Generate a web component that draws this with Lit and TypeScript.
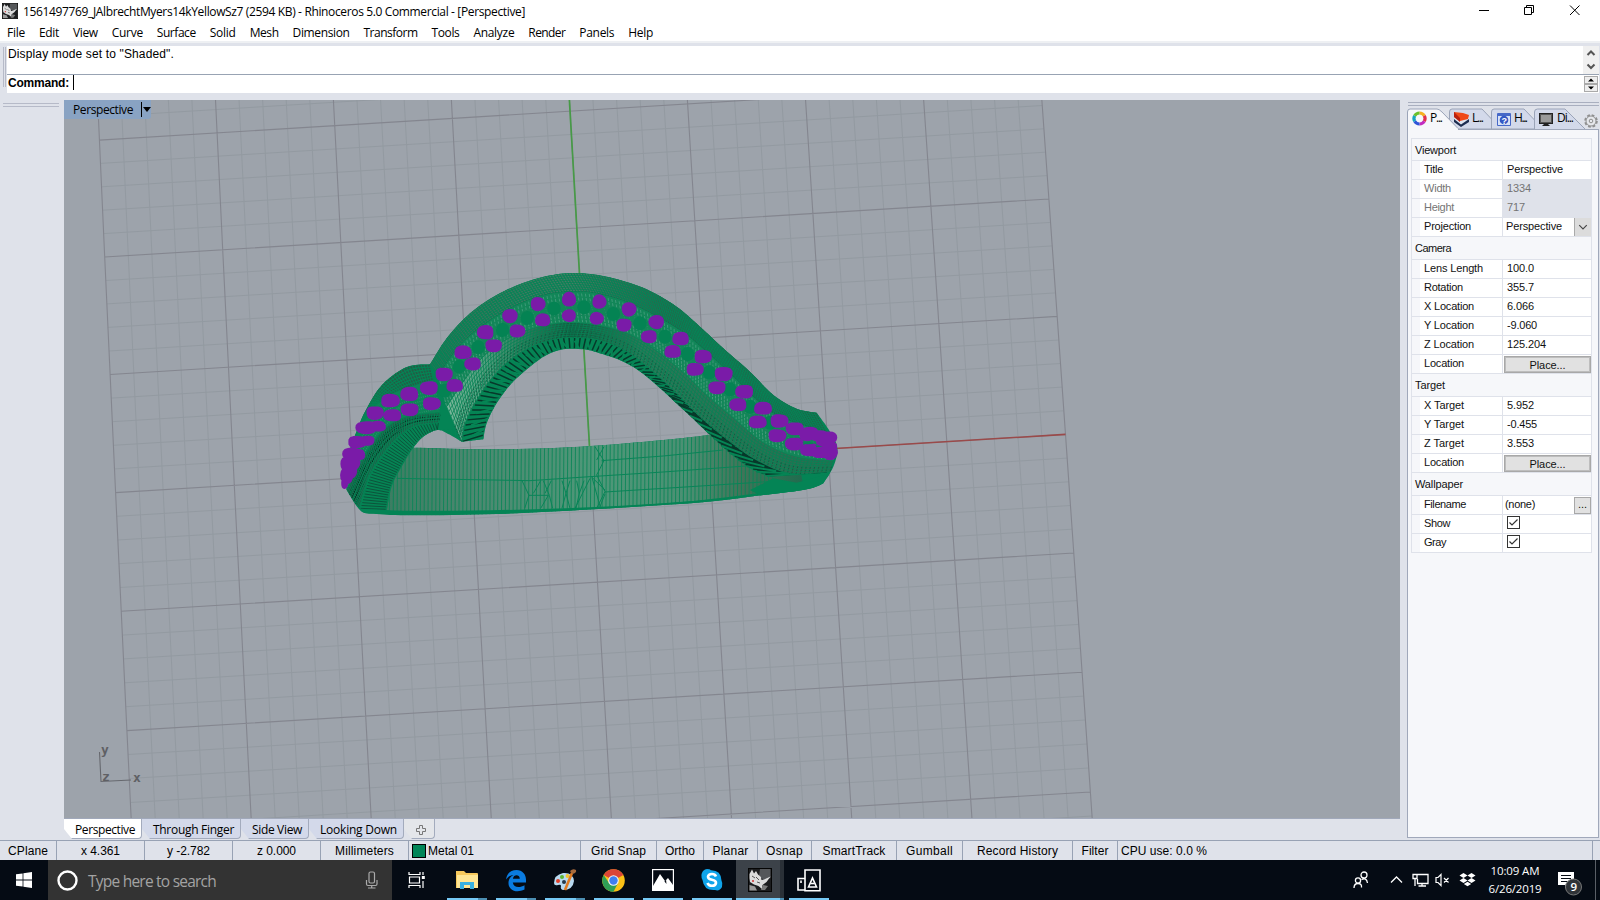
import { LitElement, html, svg, css } from "lit";
import { customElement, property } from "lit/decorators.js";
import { classMap } from "lit/directives/class-map.js";
import { styleMap } from "lit/directives/style-map.js";

type Pt = [number, number];

/** One line of text spaced out to a given width in pixels. */
@customElement("fit-text")
class FitText extends LitElement {
  @property() text = "";
  @property({ type: Number }) w = 0;
  static styles = css`
    :host { display: inline-block; flex: none; white-space: pre; overflow: visible; }
    .t { display: inline-block; }
  `;
  updated() {
    const s = this.renderRoot.querySelector(".t") as HTMLElement;
    s.style.letterSpacing = "0px";
    const natural = s.getBoundingClientRect().width;
    s.style.letterSpacing = (this.w - natural) / this.text.length + "px";
  }
  render() {
    return html`<span class="t">${this.text}</span>`;
  }
}
const fit = (text: string, w: number) => html`<fit-text .text=${text} .w=${w}></fit-text>`;

/* ---------- geometry helpers ---------- */
function parse(s: string): Pt[] {
  return s.trim().split(/\s+/).map((p) => p.split(",").map(Number) as Pt);
}
function smooth(p: Pt[], k = 8): Pt[] {
  const out: Pt[] = [];
  for (let i = 0; i < p.length - 1; i++) {
    const a = p[Math.max(0, i - 1)], b = p[i], c = p[i + 1], d = p[Math.min(p.length - 1, i + 2)];
    for (let j = 0; j < k; j++) {
      const t = j / k, t2 = t * t, t3 = t2 * t;
      const f = (n: 0 | 1) =>
        0.5 * (2 * b[n] + (c[n] - a[n]) * t + (2 * a[n] - 5 * b[n] + 4 * c[n] - d[n]) * t2 + (3 * b[n] - a[n] - 3 * c[n] + d[n]) * t3);
      out.push([f(0), f(1)]);
    }
  }
  out.push(p[p.length - 1]);
  return out;
}
function resample(p: Pt[], n: number): Pt[] {
  const len = [0];
  for (let i = 1; i < p.length; i++) len.push(len[i - 1] + Math.hypot(p[i][0] - p[i - 1][0], p[i][1] - p[i - 1][1]));
  const out: Pt[] = [];
  let j = 1;
  for (let i = 0; i <= n; i++) {
    const l = (len[len.length - 1] * i) / n;
    while (j < p.length - 1 && len[j] < l) j++;
    const t = (l - len[j - 1]) / (len[j] - len[j - 1] || 1);
    out.push([p[j - 1][0] + (p[j][0] - p[j - 1][0]) * t, p[j - 1][1] + (p[j][1] - p[j - 1][1]) * t]);
  }
  return out;
}
const mix = (a: Pt, b: Pt, t: number): Pt => [a[0] + (b[0] - a[0]) * t, a[1] + (b[1] - a[1]) * t];
const path = (p: Pt[], close = false) => "M" + p.map((q) => q[0].toFixed(1) + " " + q[1].toFixed(1)).join("L") + (close ? "Z" : "");
const curve = (s: string) => smooth(parse(s));
const area = (a: Pt[], b: Pt[]) => path([...a, ...b.slice().reverse()], true);
/** Cross lines between two edges. */
function rungs(a: Pt[], b: Pt[], n: number, t0 = 0, t1 = 1, skew = 0) {
  const A = resample(a, n), B = resample(b, n);
  let d = "";
  for (let i = 0; i <= n; i++) {
    const j = Math.max(0, Math.min(n, i + skew));
    d += path([mix(A[i], B[j], t0), mix(A[i], B[j], t1)]);
  }
  return d;
}
/** Lines running along a ribbon. */
function rails(a: Pt[], b: Pt[], m: number) {
  const A = resample(a, 90), B = resample(b, 90);
  let d = "";
  for (let k = 0; k <= m; k++) d += path(A.map((p, i) => mix(p, B[i], k / m)));
  return d;
}

/* ---------- construction grid ---------- */
function gridPoint(u: number, v: number): Pt {
  const l: Pt = [115.6 - 5.55 * v + 0.05 * v * v, 492.6 - 118.4 * v + 0.3 * v * v];
  const r: Pt = [1065.5 - 8.3 * v, 434.4 - 118.3 * v + 0.3 * v * v];
  return mix(l, r, (u + 4) / 8);
}
let minor = "", major = "";
for (let i = -20; i <= 20; i++) {
  const a = path([gridPoint(i / 5, 4), gridPoint(i / 5, 2), gridPoint(i / 5, 0), gridPoint(i / 5, -2), gridPoint(i / 5, -4)]);
  const b = path([gridPoint(-4, i / 5), gridPoint(4, i / 5)]);
  if (i % 5) minor += a + b;
  else major += a + b;
}
const greenAxis = path([gridPoint(0, 4), gridPoint(0, 0)]);
const redAxis = path([gridPoint(0, 0), gridPoint(4, 0)]);

/* ---------- ring model, three units per pixel ---------- */
const outer = curve("300,313 350,235 420,160 500,105 590,65 680,43 760,40 850,55 950,88 1040,140 1110,200 1180,265 1260,335 1330,405 1400,446 1460,458");
const chanO = curve("325,345 390,255 460,195 540,145 630,108 715,95 800,100 900,130 990,175 1070,225 1140,285 1210,350 1270,410 1330,460 1400,490 1490,515");
const chanI = curve("350,440 400,365 450,300 510,250 580,215 650,195 720,188 800,195 890,220 970,266 1060,338 1130,406 1210,474 1300,548 1400,590 1510,602");
const tube = curve("395,545 405,490 440,420 485,355 540,300 600,262 660,240 720,232 800,238 880,268 950,318 1030,390 1110,470 1200,545 1280,600 1380,640 1500,635");
const inner = curve("460,538 470,490 500,430 545,370 600,320 650,285 700,268 760,268 800,277 880,305 950,350 1050,440 1140,525 1200,580 1260,625 1310,648");
const leftOut = curve("300,313 240,318 190,345 145,388 105,455 75,530 50,600 50,690");
const leftChO = curve("310,360 250,378 190,400 140,436 100,490 70,550 46,620");
const leftChI = curve("330,458 240,468 175,498 125,555 85,620 50,690");
const leftMid = curve("325,488 255,498 200,535 150,595 115,655 88,745");
const leftIn = curve("322,510 280,530 250,563 215,620 185,680 170,755");
const bandTop = curve("200,563 500,568 750,560 1000,540 1220,515 1400,560");
const bandBot = curve("170,752 300,760 500,758 750,746 1100,722 1420,680");
let staves = "";
for (let x = 178; x < 1330; x += 11.6) staves += `M${x + 2} 510L${x} 770`;
const silhouette =
  path([
    ...curve("50,690 48,640 60,570 85,500 105,455 145,388 190,345 240,318 300,313"),
    ...outer,
    ...curve("1460,458 1500,515 1522,565 1510,620 1480,670"),
    ...curve("1480,670 1430,688 1300,705 1100,728 750,750 500,762 250,766 140,762 92,752 50,690"),
  ], true) +
  path([...inner.filter((p) => p[0] <= 1140), ...curve("1140,525 1000,540 750,560 500,568 250,563"), ...curve("250,563 280,530 322,510 355,522 395,545"), [460, 538]], true);

const gems: [number, number, number, number][] = (
  "717,118,20,21 624,132,21,20 540,168,22,20 466,217,23,20 399,277,24,19 342,343,24,19 297,384,25,19 238,402,25,20 181,422,26,19 135,459,24,19 " +
  "108,503,29,18 142,499,24,15 82,546,26,17 112,542,20,14 64,581,25,17 84,584,20,16 52,612,20,22 66,608,24,22 50,645,18,26 44,668,10,18 62,635,18,20 " +
  "717,167,20,18 638,180,21,18 562,213,22,18 491,257,23,18 428,312,23,18 374,377,23,18 305,431,25,18 239,449,25,18 187,466,25,17 " +
  "808,125,20,20 897,148,21,20 979,186,22,20 1052,236,23,19 1119,290,24,19 1181,342,25,20 1243,395,25,19 1299,445,25,18 1348,483,25,19 1394,506,25,18 " +
  "1438,520,26,18 1470,528,25,16 1500,533,20,18 1485,545,25,14 1430,525,20,18 " +
  "800,175,20,18 882,195,21,18 957,230,22,18 1028,275,23,18 1095,328,24,18 1161,383,24,18 1224,434,24,18 1283,486,25,18 1342,527,25,18 1393,552,26,18 " +
  "1440,570,27,18 1472,576,26,17 1500,578,22,21 1506,560,15,14"
).split(" ").map((g) => g.split(",").map(Number) as [number, number, number, number]);
function gemPath([x, y, a, b]: number[], i: number) {
  const pts: Pt[] = [];
  for (let k = 0; k < 16; k++) {
    const t = (k / 16) * Math.PI * 2;
    const c = Math.cos(t), s = Math.sin(t);
    const r = 1.07 + 0.1 * Math.pow(Math.abs(Math.sin(2 * t)), 2) * (a - b > 2 ? 1 : 0.2) + 0.035 * Math.sin(3 * t + i * 1.7);
    pts.push([x + a * r * c, y + b * r * s]);
  }
  return path(pts, true);
}
const gemShape = gems.map(gemPath).join("");
const beads = "762,142 672,146 592,174 518,210 445,262 388,320 345,392 275,420 850,162 930,190 1005,230 1073,282 1138,337 1200,388 1260,440 1320,488"
  .split(" ").map((s) => s.split(",").map(Number));

@customElement("model-view")
class ModelView extends LitElement {
  static styles = css`
    :host { display: block; overflow: hidden; }
    svg { display: block; }
    .lab { font: bold 13px "DejaVu Sans Mono", monospace; fill: #5f6064; }
    .f { fill: none; }
  `;
  render() {
    return html`<svg width="1336" height="718" viewBox="64 100 1336 718">
      <defs>
        <linearGradient id="band" x1="0" x2="1"><stop offset="0" stop-color="#3c7d62" /><stop offset=".2" stop-color="#4c8870" /><stop offset=".5" stop-color="#4f9879" /><stop offset=".72" stop-color="#4b9073" /><stop offset=".85" stop-color="#427459" /><stop offset="1" stop-color="#1f6c4e" /></linearGradient>
        <linearGradient id="tb" x1="0" x2="1"><stop offset="0" stop-color="#7cb89c" /><stop offset=".08" stop-color="#5ba585" /><stop offset=".2" stop-color="#2f7d5c" /><stop offset=".32" stop-color="#14583e" /><stop offset=".5" stop-color="#2a7a58" /><stop offset="1" stop-color="#2c6c50" /></linearGradient>
        <linearGradient id="rim" x1="0" x2="1"><stop offset="0" stop-color="#2a7256" /><stop offset=".35" stop-color="#4b7d66" /><stop offset=".6" stop-color="#2c5f49" /><stop offset="1" stop-color="#245c45" /></linearGradient>
        <clipPath id="sil"><path d=${silhouette} clip-rule="evenodd" /></clipPath>
      </defs>
      <rect x="64" y="100" width="1336" height="718" fill="#9da3ab" />
      <path class="f" d=${minor} stroke="#939aa1" stroke-width="1" />
      <path class="f" d=${major} stroke="#84868f" stroke-width="1.1" />
      <path class="f" d=${redAxis} stroke="#9a4a4a" stroke-width="1.6" />
      <path class="f" d=${greenAxis} stroke="#479a47" stroke-width="1.7" />
      <path class="f" d="M99.5 752 101 781.5 131 780" stroke="#66686e" stroke-width="1.1" />
      <text class="lab" x="101" y="754">y</text>
      <text class="lab" x="102" y="781">z</text>
      <text class="lab" x="133" y="782">x</text>
      <g transform="translate(330 260) scale(.33333)">
        <path d=${silhouette} fill="#048455" fill-rule="evenodd" />
        <g clip-path="url(#sil)">
          <path d=${area(bandTop, bandBot)} fill="url(#band)" />
          <path class="f" d=${staves} stroke="#098557" stroke-width="2.6" />
          <path class="f" d="M200 655 600 662 780 650 1000 636 1330 612M815 602 1000 588 1180 570M825 696 1050 682 1330 664" stroke="#098557" stroke-width="3" />
          <path class="f" d="M795 560 822 602 800 645 825 695 800 745M822 560 800 600M786 652 825 690M786 652 812 745M825 702 808 745M735 745 780 655M576 662 597 706 584 745M597 706H655M632 662 610 700M640 662 658 706 668 745M655 706 632 745M664 662 645 700M696 662 708 700 696 745M720 662 708 700 720 745M740 662 748 700 738 745M762 662 748 700" stroke="#098557" stroke-width="3" />
          <path d=${area(inner, tube)} fill="#058454" />
          <path class="f" d=${rungs(tube, inner, 84, 0.05, 0.95, 1)} stroke="#07382a" stroke-width="4.4" />
          <path class="f" d=${rungs(tube, inner, 34, 0.3, 1, 1)} stroke="#058454" stroke-width="6" />
          <path d=${area(chanI, tube)} fill="url(#tb)" />
          <path class="f" d=${rails(chanI, tube, 7)} stroke="#078356" stroke-width="2.4" />
          <path class="f" d=${rungs(chanI, tube, 130)} stroke="#078356" stroke-width="2.4" />
          <path class="f" d=${rungs(chanI, tube, 110, 0.55, 1)} stroke="#124e39" stroke-width="2" stroke-dasharray="5 4" />
          <path d=${area(outer, chanO)} fill="url(#rim)" />
          <path class="f" d=${rails(outer, chanO, 8)} stroke="#058455" stroke-width="2.6" />
          <path class="f" d=${rungs(outer, chanO, 165)} stroke="#078356" stroke-width="3.2" />
          <path class="f" d=${rails(resample(chanO, 90), resample(chanO, 90).map((p) => [p[0], p[1] + 5] as Pt), 1)} stroke="#0b6545" stroke-width="2" stroke-dasharray="6 4" />
          <path d=${area(chanO, chanI)} fill="#128658" />
          <path class="f" d=${rungs(chanO, chanI, 120, 0.06, 0.3)} stroke="#48a080" stroke-width="2.4" stroke-dasharray="9 4" />
          <path class="f" d=${rungs(chanO, chanI, 120, 0.66, 0.97)} stroke="#4c9f80" stroke-width="2.6" stroke-dasharray="8 3" />
          <path class="f" d=${rungs(chanO, chanI, 70, 0.3, 0.7, 1)} stroke="#3b9872" stroke-width="1.6" stroke-dasharray="3 5" />
          ${beads.map(([x, y]) => svg`<ellipse cx=${x} cy=${y} rx="20" ry="21" fill="#048353"/>`)}
          <path d=${area(leftOut, leftChO)} fill="#245c45" />
          <path class="f" d=${rails(leftOut, leftChO, 6) + rungs(leftOut, leftChO, 56)} stroke="#058455" stroke-width="3.2" />
          <path d=${area(leftChO, leftChI)} fill="#0d8557" />
          <path class="f" d=${rungs(leftChO, leftChI, 60, 0.3, 0.95)} stroke="#3f9a77" stroke-width="1.8" stroke-dasharray="4 7" />
          <path d=${area(leftMid, leftIn)} fill="#058454" />
          <path class="f" d=${rungs(leftMid, leftIn, 42, 0.05, 0.95, -1)} stroke="#0e4d38" stroke-width="2.6" />
          <path d=${area(leftChI, leftMid)} fill="#1d6249" />
          <path class="f" d=${rungs(leftChI, leftMid, 60, 0.2, 0.8)} stroke="#052a1e" stroke-width="4" stroke-dasharray="6 5" />
          <path class="f" d=${rails(leftChI, leftMid, 4) + rungs(leftChI, leftMid, 50)} stroke="#058455" stroke-width="2.8" />
          <path class="f" d="M92 752C300 768 800 752 1100 728S1430 690 1480 670" stroke="#048455" stroke-width="12" />
          <path d="M1260 690 1330 655 1400 668 1500 640 1480 680 1300 712Z" fill="#048455" />
        </g>
        <path d=${gemShape} fill="#7a1ba8" />
        <path d="M1416 548 1440 545 1452 552 1430 553ZM1456 556 1478 559 1460 562Z" fill="#0b8257" />
      </g>
    </svg>`;
  }
}

const MENUS: [string, number][] = [["File", 18], ["Edit", 20], ["View", 25], ["Curve", 31], ["Surface", 39], ["Solid", 26], ["Mesh", 29], ["Dimension", 57], ["Transform", 54], ["Tools", 28], ["Analyze", 41], ["Render", 37], ["Panels", 35], ["Help", 25]];

type Row = { l: string; w: number; v?: string; vw?: number; kind?: string };
const PROPS: { title: string; w: number; rows: Row[] }[] = [
  { title: "Viewport", w: 41, rows: [
    { l: "Title", w: 19, v: "Perspective", vw: 56 }, { l: "Width", w: 27, v: "1334", vw: 24, kind: "off" },
    { l: "Height", w: 30, v: "717", vw: 18, kind: "off" }, { l: "Projection", w: 47, v: "Perspective", vw: 56, kind: "drop" }] },
  { title: "Camera", w: 36, rows: [
    { l: "Lens Length", w: 59, v: "100.0", vw: 27 }, { l: "Rotation", w: 39, v: "355.7", vw: 27 }, { l: "X Location", w: 50, v: "6.066", vw: 27 },
    { l: "Y Location", w: 50, v: "-9.060", vw: 30 }, { l: "Z Location", w: 50, v: "125.204", vw: 39 }, { l: "Location", w: 40, kind: "btn" }] },
  { title: "Target", w: 30, rows: [
    { l: "X Target", w: 40, v: "5.952", vw: 27 }, { l: "Y Target", w: 40, v: "-0.455", vw: 30 }, { l: "Z Target", w: 40, v: "3.553", vw: 27 }, { l: "Location", w: 40, kind: "btn" }] },
  { title: "Wallpaper", w: 48, rows: [
    { l: "Filename", w: 42, v: "(none)", vw: 30, kind: "file" }, { l: "Show", w: 26, kind: "check" }, { l: "Gray", w: 22, kind: "check" }] },
];

@customElement("side-panel")
class SidePanel extends LitElement {
  static styles = css`
    :host { display: flex; flex-direction: column; font: 11px "Liberation Sans", sans-serif; color: #111; }
    .grip { height: 2px; border-top: 1px solid #a9afbf; border-bottom: 1px solid #a9afbf; margin: 2px 0 0 1px; }
    .tabs { display: flex; height: 22px; margin-top: 2px; }
    .tabs svg { display: block; }
    .box { flex: 1; border: 1px solid #a0a8ba; border-top: 0; background: #f6f7fa; padding: 8px 6px 0 3px; }
    .grid { border: 1px solid #dfe2ea; border-bottom: 0; }
    .head { height: 22px; display: flex; align-items: center; padding-left: 3px; border-bottom: 1px solid #dfe2ea; }
    .head:first-child { height: 21px; }
    .row { height: 18px; display: grid; grid-template-columns: 8px 83px 1fr; border-bottom: 1px solid #dfe2ea; background: #fff; }
    .ind { background: #f6f7fa; }
    .lab { padding-left: 4px; border-right: 1px solid #dfe2ea; display: flex; align-items: flex-start; padding-top: 2px; }
    .val { padding-left: 4px; display: flex; align-items: flex-start; padding-top: 2px; }
    .off .lab, .off .val { color: #747474; }
    .off .val { background: #dfe2ea; }
    .drop .val, .file .val { padding-left: 3px; justify-content: space-between; }
    .file .val { padding-left: 2px; }
    .check .val { padding-top: 1px; }
    .btn .val { padding: 1px 0 0 1px; }
    .place { flex: 1; height: 15px; border: 1px solid #a8a8a8; outline: 1px solid #bdbdbd; outline-offset: -2px; background: #e1e1e1; display: flex; justify-content: center; align-items: center; }
    .arrow { width: 16px; height: 18px; margin-top: -2px; background: #dcdcdc; border-left: 1px solid #aaa; }
    .more { width: 15px; height: 15px; margin-top: -1px; border: 1px solid #a8a8a8; background: #e1e1e1; text-align: center; line-height: 13px; }
    .tl { font: 12px "Open Sans", sans-serif; }
  `;
  private cell(r: Row) {
    if (r.kind === "btn") return html`<div class="place">${fit("Place...", 36)}</div>`;
    if (r.kind === "check") return html`<svg width="13" height="13"><rect x=".5" y=".5" width="12" height="12" fill="#fff" stroke="#333" /><path d="M2.5 6.5 5 9 10.5 3.5" fill="none" stroke="#333" stroke-width="1.2" /></svg>`;
    return html`${fit(r.v!, r.vw!)}${r.kind === "drop" ? html`<svg class="arrow" viewBox="0 0 17 18"><path d="M4.500 7 8.500 11 12.500 7" fill="none" stroke="#444" stroke-width="1.200" /></svg>` : ""}${r.kind === "file" ? html`<div class="more">...</div>` : ""}`;
  }
  render() {
    const tab = (x: number, e: number) => `M${x} 21V4Q${x} 1 ${x + 3} 1H${e - 20}L${e} 21`;
    return html`
      <div class="grip"></div>
      <div class="tabs"><svg width="193" height="22">
        <path d="M0 21.500H192" stroke="#a0a8ba" />
        <path d=${tab(127.5, 178)} fill="#d3d9ea" stroke="#9ba4b8" />
        <path d="M84.500 21V4Q84.500 1 87 1H117L127.500 12V21Z" fill="#d3d9ea" stroke="#9ba4b8" /><path d="M42.500 4Q42.500 1 45 1H75L84.500 11V21H51L42.500 12Z" fill="#d3d9ea" stroke="#9ba4b8" />
        <path d="M.500 22V4Q.500 1 3 1H30Q32 1 35 4L52 21.500H0" fill="#f6f7fa" stroke="#9ba4b8" /><path d="M1 21.500H51" stroke="#f6f7fa" stroke-width="2" />
        <g fill="none" stroke-width="3.200">
          <path d="M12.500 5A5.500 5.500 0 0 1 17.300 7.800" stroke="#f5b020" /><path d="M17.300 7.800A5.500 5.500 0 0 1 17.300 13.300" stroke="#e02f4a" /><path d="M17.300 13.300A5.500 5.500 0 0 1 12.500 16" stroke="#c22bc0" />
          <path d="M12.500 16A5.500 5.500 0 0 1 7.700 13.300" stroke="#2f55d8" /><path d="M7.700 13.300A5.500 5.500 0 0 1 7.700 7.800" stroke="#17a4c0" /><path d="M7.700 7.800A5.500 5.500 0 0 1 12.500 5" stroke="#6ac12c" />
        </g>
        <path d="M47 9 53 15 62 10V14L54 19 47 14Z" fill="#1d2d50" /><path d="M47 8 53 13.500 62 9V11L54 16.500 47 11Z" fill="#dfe6f0" /><path d="M47 4 56 5 62 7 61 11 53 13 47 9Z" fill="#f04a18" /><path d="M47 4 53 10 53 14 47 9Z" fill="#b82010" />
        <rect x="90" y="5" width="14" height="13" rx="1" fill="#4668c8" /><rect x="91" y="8" width="12" height="9" fill="#d8e2f6" /><circle cx="97" cy="12" r="4.300" fill="#3458c4" /><text x="94.500" y="15.500" font-size="9" font-weight="bold" fill="#fff">?</text>
        <rect x="132.500" y="5.500" width="13" height="10" fill="#555" stroke="#222" /><rect x="134" y="7" width="10" height="7" fill="#9a9a9a" /><path d="M137 16H141L143 18H135Z" fill="#222" />
        <g class="tl"><text x="23" y="14" textLength="13">P...</text><text x="65" y="14" textLength="12">L...</text><text x="107" y="14" textLength="14">H...</text><text x="150" y="14" textLength="17">Di...</text></g>
        <circle cx="184" cy="13" r="5.800" fill="none" stroke="#8f8f8f" stroke-width="2" stroke-dasharray="2.700 1.860" /><circle cx="184" cy="13" r="5" fill="#e6e8ec" stroke="#8f8f8f" /><circle cx="184" cy="13" r="1.800" fill="none" stroke="#8f8f8f" />
      </svg></div>
      <div class="box"><div class="grid">
        ${PROPS.map((g) => html`<div class="head">${fit(g.title, g.w)}</div>
          ${g.rows.map((r) => html`<div class=${classMap({ row: true, [r.kind ?? "plain"]: true })}><div class="ind"></div><div class="lab">${fit(r.l, r.w)}</div><div class="val">${this.cell(r)}</div></div>`)}`)}
      </div></div>`;
  }
}

const rhino = (s: number) => html`<svg width=${s} height=${s} viewBox="0 0 24 24"><rect x=".5" y=".5" width="23" height="23" fill="#1c1d1f" stroke="#050505" /><path d="M12 1H22.500V10L16 12 11 8Z" fill="#55575a" /><path d="M1.500 6 4 1.500 6 5.500 8 3 10 6.500 13 9 13.500 12 16 11.500 22.500 8.500 18.500 14 14.500 17 14 21 10.500 18 6 16.500 2 14 1.500 10Z" fill="#dcdcdc" /><path d="M1.500 17 7 18.500 9 22.500H1.500Z" fill="#9a9a9a" /><path d="M15 17 20 18 17 22 13 22Z" fill="#7a7a7a" /><path d="M4 8 7 10M8 9 11 12M9 14 12 15" stroke="#555" /><circle cx="5" cy="13" r="1" fill="#c33" /></svg>`;

const STATUS: [string, number, number][] = [["CPlane", 57, 40], ["x 4.361", 88, 39], ["y -2.782", 88, 43], ["z 0.000", 88, 39], ["Millimeters", 88, 59]];
const TOGGLES: [string, number, number][] = [["Grid Snap", 76, 55], ["Ortho", 47, 30], ["Planar", 54, 36], ["Osnap", 54, 37], ["SmartTrack", 85, 63], ["Gumball", 66, 47], ["Record History", 110, 81], ["Filter", 45, 27]];

@customElement("task-bar")
class TaskBar extends LitElement {
  static styles = css`
    :host { display: flex; height: 40px; background: #050b14; color: #fff; font: 12px "Open Sans", sans-serif; }
    svg { display: block; overflow: visible; }
    .start { width: 48px; display: grid; place-items: center; }
    .search { width: 344px; box-sizing: border-box; background: #333; display: flex; align-items: center; padding: 0 12px 0 9px; color: #a3a3a3; font-size: 15.500px; }
    .search fit-text { margin-top: 1px; }
    .search .mic { margin-left: auto; }
    .ring { margin-right: 10px; }
    .view { width: 49px; margin-right: 1px; display: grid; place-items: center; }
    .app { width: 49px; display: grid; place-items: center; position: relative; flex: none; }
    .app.on { background: linear-gradient(90deg, #3c4249 44px, #2a3037 44px); width: 48px; }
    .bar { position: absolute; bottom: 0; height: 2px; background: #76c9f5; left: 5px; right: 4px; }
    .app.multi .bar { background: linear-gradient(90deg, #76c9f5 31px, #4c8fb3 31px); }
    .app.on .bar { left: 0; right: 0; background: linear-gradient(90deg, #76c9f5 44px, #4c8fb3 44px); }
    .tray { margin-left: auto; display: flex; align-items: center; }
    .clock { width: 54px; text-align: center; line-height: 18px; display: flex; flex-direction: column; align-items: center; margin: 0 15px 0 7px; font-size: 11.500px; }
    .note { margin-right: 10px; width: 28px; height: 40px; }
    .peek { width: 4px; height: 40px; border-left: 1px solid #5a5f66; }
  `;
  render() {
    const app = (icon: unknown, cls: Record<string, boolean> = {}) => html`<div class=${classMap({ app: true, ...cls })}>${icon}<div class="bar"></div></div>`;
    return html`
      <div class="start"><svg width="16" height="16"><path d="M0 2.300 6.600 1.400V7.600H0ZM7.400 1.300 16 0V7.600H7.400ZM0 8.400H6.600V14.600L0 13.700ZM7.400 8.400H16V16L7.400 14.700Z" fill="#fff" /></svg></div>
      <div class="search"><svg class="ring" width="21" height="21"><circle cx="10.500" cy="10.500" r="9" fill="none" stroke="#fff" stroke-width="2.400" /></svg>${fit("Type here to search", 128)}
        <svg class="mic" width="16" height="18" fill="none" stroke="#aaa" stroke-width="1.200"><rect x="5" y="1" width="5.500" height="11" rx="1.500" /><path d="M2.500 9V13Q2.500 14.500 4 14.500H11.500Q13 14.500 13 13V9M7.700 14.500V17M4 17H11.500" /></svg></div>
      <div class="view"><svg width="18" height="16" fill="none" stroke="#fff" stroke-width="1.200"><path d="M1 0V2.500H12V0M1 16V13.500H12V16M1.500 5H11.500V11H1.500ZM15 0V3M15 9V16" /><rect x="13.800" y="4" width="3" height="3" fill="#fff" stroke="none" /></svg></div>
      ${app(html`<svg width="22" height="20"><path d="M0 1H8L10 3H21Q22 3 22 4V18H0Z" fill="#f7c95c" /><rect x="1" y="5" width="21" height="13" fill="#ffe694" /><path d="M4 19V12H18V19H14V15H8V19Z" fill="#38b0e0" /></svg>`, { multi: true })}
      ${app(html`<svg width="20" height="21"><path d="M0 9.500C1 3 5 0 10.500 0 16.500 0 20 4.500 20 9.500V12.500H6.800C7.500 18 14 18 18.500 15.300V19.500C10 23.500 2.300 20 2.500 12.600 2.600 9 4.500 6.500 7.500 5 4.500 5.300 2 6.500 0 9.500ZM6.900 8.700H13.800C13.500 4 7.500 4.500 6.900 8.700Z" fill="#0a7be0" /></svg>`, { multi: true })}
      ${app(html`<svg width="24" height="23"><path d="M1 14Q1 6 10 4 20 3 21 12 20 21 10 21 7 20 8 17 8 15 5 16 1 17 1 14Z" fill="#b9daf0" /><circle cx="5" cy="12" r="2" fill="#e0402b" /><circle cx="9" cy="8" r="2" fill="#5cb531" /><circle cx="14.500" cy="7" r="2" fill="#f2c32b" /><circle cx="11" cy="13" r="2" fill="#26394a" /><path d="M19 4 12 21" stroke="#e07a20" stroke-width="2.600" /><path d="M17 2Q20-1 23 1 24 4 19 5Z" fill="#a86b3c" /></svg>`, { multi: true })}
      ${app(html`<svg width="23" height="23" viewBox="-11.500 -11.500 23 23"><circle r="11.300" fill="#fbc116" /><path d="M0 0-9.800-5.600A11.300 11.300 0 0 1 9.800-5.600Z" fill="#db4437" /><path d="M4.500 2.500 0 11.300A11.300 11.300 0 0 1-9.800-5.600L-4.500 2.500Z" fill="#2f9f56" /><circle r="5.300" fill="#f5f5f5" /><circle r="4.200" fill="#3f7ef0" /></svg>`)}
      ${app(html`<svg width="22" height="22"><rect x=".6" y=".6" width="20.800" height="20.800" fill="#050b14" stroke="#fff" stroke-width="1.200" /><path d="M1 17 8 5 13 12 16 9 21 16V21H1Z" fill="#fff" /><path d="M12.500 12.500 14.500 15 14 10.500" fill="#050b14" /></svg>`)}
      ${app(html`<svg width="22" height="22"><path d="M6 0Q9 0 10 1.200 20 1 20.500 11.500 22 14 21 18 18.500 22.500 14 21 3 22 1.500 11-1 6 2 2 4 0 6 0Z" fill="#10a4ea" /><path d="M15 7.500Q14 5 11 5 7.300 5 7 7.700 7 10 11 10.800 15.200 11.600 15 14 14.500 16.800 11 16.800 7.500 16.800 6.500 14" fill="none" stroke="#fff" stroke-width="2.600" /></svg>`)}
      ${app(rhino(24), { on: true })}
      ${app(html`<svg width="24" height="23" fill="none" stroke="#fff" stroke-width="1.600"><path d="M7.500 9.500H1V21H7.500M8 1H23V21.800H8Z" /><path d="M11.500 18 15.500 9 19.500 18ZM4 11.500V14" /><path d="M13.500 14.500H17.500" /></svg>`)}
      <div class="tray">
        <svg width="18" height="18" fill="none" stroke="#fff" stroke-width="1.300"><circle cx="5" cy="9.500" r="2.600" /><circle cx="11" cy="4" r="3" /><path d="M1 17Q1 12.500 5 12.500T8.500 16.500M8.500 8.500Q13.500 6 14.500 12" /></svg>
        <svg width="60" height="16" fill="none" stroke="#fff" stroke-width="1.300"><path d="M20 10.500 25.500 5 31 10.500" /><path d="M45 2.500H57V11.500H46.500V7M51 11.500V14M47.500 14H55M42 2.500H46V6.500H42ZM44 6.500V14" /></svg>
        <svg width="20" height="16" fill="none" stroke="#fff" stroke-width="1.200"><path d="M2 5.500H4L7 2.500V13.500L4 10.500H2ZM10 6 14.500 10.500M14.500 6 10 10.500" transform="translate(3)" /></svg>
        <svg width="30" height="16" fill="#fff"><path d="M12.500 1 16.500 3.500 12.500 6 8.500 3.500ZM20.500 1 24.500 3.500 20.500 6 16.500 3.500ZM12.500 6 16.500 8.500 12.500 11 8.500 8.500ZM20.500 6 24.500 8.500 20.500 11 16.500 8.500ZM12.800 12 16.500 9.800 20.200 12 16.500 14.300Z" /></svg>
        <div class="clock">${fit("10:09 AM", 49)}${fit("6/26/2019", 53)}</div>
        <div class="note"><svg width="28" height="40"><path d="M1 12H17V25H12L8 28.500V25H1Z" fill="#fff" /><path d="M4 15.500H14M4 18.500H14M4 21.500H10" stroke="#050b14" /><circle cx="16.500" cy="27" r="8" fill="#2f3338" stroke="#777" /><text x="13.500" y="31" font-size="11.500" font-weight="600" fill="#fff">9</text></svg></div>
        <div class="peek"></div>
      </div>`;
  }
}

@customElement("app-root")
class AppRoot extends LitElement {
  static styles = css`
    :host { display: flex; flex-direction: column; width: 1600px; height: 900px; overflow: hidden; background: #dfe2ea; font: 12px "Liberation Sans", sans-serif; color: #000; }
    svg { display: block; }
    .ui { font-family: "Open Sans", sans-serif; }
    .title { height: 22px; background: #fff; display: flex; align-items: center; padding-left: 2px; }
    .title .name { margin: 1px 0 0 5px; flex: 1; }
    .menu { height: 19px; background: #fff; display: flex; align-items: center; gap: 13.950px; padding: 1px 0 0 7px; box-sizing: border-box; }
    .strip { height: 2px; background: #eef0f3; }
    .cmd { height: 49px; display: flex; padding: 3px 1px 5px 3px; box-sizing: border-box; }
    .vgrip { width: 1px; border: 1px solid #b6bac8; border-width: 0 1px; margin: 1px 1px 0 0; }
    .lines { flex: 1; display: flex; flex-direction: column; }
    .hist { height: 28px; background: #fff; border-bottom: 1px solid #98a3b3; display: flex; justify-content: space-between; }
    .hist fit-text { margin: 1px 0 0 1px; }
    .entry { flex: 1; background: #fff; display: flex; align-items: flex-start; }
    .entry b { margin: 1px 0 0 1px; }
    .caret { width: 1px; height: 15px; background: #000; margin-left: 4px; }
    .entry svg { margin-left: auto; }
    .main { flex: 1; display: flex; min-height: 0; }
    .dock { width: 64px; padding: 11px 5px 0 3px; box-sizing: border-box; }
    .hg { height: 2px; border: 1px solid #b6bac8; border-width: 1px 0; }
    .center { width: 1336px; display: flex; flex-direction: column; margin-top: 8px; }
    .view { position: relative; height: 718px; border-bottom: 1px solid #a0a8ba; }
    .vlabel { position: absolute; left: 0; top: 0; height: 19px; width: 87px; background: #89a3c3; display: flex; align-items: center; box-sizing: border-box; padding-left: 9px; border-radius: 0 0 3px 0; }
    .vlabel i { width: 1px; height: 15px; background: #000; margin: 0 1px 0 8px; }
    .tabs { height: 21px; display: flex; }
    .tab { box-sizing: border-box; height: 20px; background: #d3d9ea; border: 1px solid #a3abbd; border-width: 0 1px 1px 0; border-radius: 0 0 4px 0; padding: 2px 0 0 11px; display: flex; align-items: center; clip-path: polygon(0 0, 100% 0, 100% 100%, 8px 100%, 0 10px); }
    .tab.sel { background: #fff; }
    .tab.add { background: #e4e6ea; }
    side-panel { width: 192px; margin: 8px 0 2px 7px; }
    .status { height: 20px; box-sizing: border-box; border-top: 1px solid #98a2b4; display: flex; }
    .c { box-sizing: border-box; border-right: 1px solid #98a2b4; display: flex; align-items: center; justify-content: center; flex: none; }
    .layer { width: 172px; justify-content: flex-start; padding-left: 3px; }
    .sw { width: 12px; height: 12px; background: #008558; border: 1px solid #000; margin-right: 2px; }
    .cpu { width: 475px; justify-content: flex-start; padding-left: 3px; }
  `;
  render() {
    const tabs: [string, number, number][] = [["Perspective", 78, 60], ["Through Finger", 99, 81], ["Side View", 68, 50], ["Looking Down", 95, 77]];
    const cell = ([t, w, tw]: [string, number, number]) => html`<div class="c" style=${styleMap({ width: w + "px" })}>${fit(t, tw)}</div>`;
    return html`
      <div class="title ui">${rhino(16)}<div class="name">${fit("1561497769_JAlbrechtMyers14kYellowSz7 (2594 KB) - Rhinoceros 5.0 Commercial - [Perspective]", 502)}</div>
        <svg width="127" height="22" fill="none" stroke="#000"><path d="M6 10.500H16M51.500 7.500H58.500V14.500H51.500ZM53.500 7.500V5.500H60.500V12.500H58.500M97 5.500 106.500 15M106.500 5.500 97 15" /></svg></div>
      <div class="menu ui">${MENUS.map(([t, w]) => fit(t, w))}</div>
      <div class="strip"></div>
      <div class="cmd"><div class="vgrip"></div><div class="lines">
        <div class="hist">${fit('Display mode set to "Shaded".', 166)}<svg width="16" height="28"><rect width="16" height="28" fill="#f0f0f0" /><path d="M4.500 9 8 5.500 11.500 9M4.500 18.500 8 22 11.500 18.500" fill="none" stroke="#555" stroke-width="2" /></svg></div>
        <div class="entry"><b>${fit("Command:", 61)}</b><div class="caret"></div><svg width="15" height="18"><rect x=".5" y="1.500" width="13" height="7" fill="#eee" stroke="#aaa" /><rect x=".5" y="9.500" width="13" height="7" fill="#eee" stroke="#aaa" /><path d="M4 6.500H10L7 3.500ZM4 11.500H10L7 14.500Z" fill="#000" /></svg></div>
      </div></div>
      <div class="main">
        <div class="dock"><div class="hg"></div></div>
        <div class="center">
          <div class="view"><model-view></model-view><div class="vlabel ui">${fit("Perspective", 60)}<i></i><svg width="9" height="6"><path d="M0 0H8L4 5Z" /></svg></div></div>
          <div class="tabs ui">${tabs.map(([t, w, tw], i) => html`<div class=${classMap({ tab: true, sel: i === 0 })} style=${styleMap({ width: w + "px" })}>${fit(t, tw)}</div>`)}
            <div class="tab add" style=${styleMap({ width: "31px" })}><svg width="12" height="12"><path d="M4.500 1.500H7.500V4.500H10.500V7.500H7.500V10.500H4.500V7.500H1.500V4.500H4.500Z" fill="none" stroke="#777" /></svg></div></div>
        </div>
        <side-panel></side-panel>
      </div>
      <div class="status">${STATUS.map(cell)}<div class="c layer" ><div class="sw"></div>${fit("Metal 01", 46)}</div>${TOGGLES.map(cell)}<div class="c cpu">${fit("CPU use: 0.0 %", 86)}</div></div>
      <task-bar></task-bar>`;
  }
}
